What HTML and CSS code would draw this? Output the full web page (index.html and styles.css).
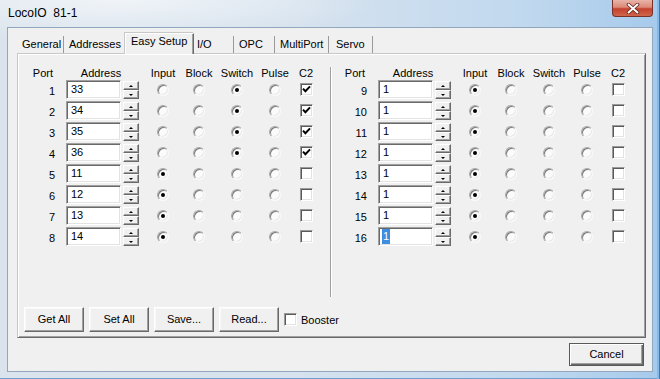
FILE: index.html
```html
<!DOCTYPE html>
<html>
<head>
<meta charset="utf-8">
<title>LocoIO 81-1</title>
<link rel="stylesheet" href="styles.css">
</head>
<body>
<div class="window">
  <div class="titlebar">
    <span class="title">LocoIO&nbsp;&nbsp;81-1</span>
    <div class="close">
      <svg width="14" height="11" viewBox="0 0 14 11">
        <path d="M2.5 1.5 L11.5 9.5 M11.5 1.5 L2.5 9.5" stroke="#5e2219" stroke-width="3.6" stroke-linecap="round"/>
        <path d="M2.5 1.5 L11.5 9.5 M11.5 1.5 L2.5 9.5" stroke="#ffffff" stroke-width="2" stroke-linecap="round"/>
      </svg>
    </div>
  </div>
  <div class="frame">
    <div class="client">
      <div class="tabs">
        <div class="tab t-general">General</div>
        <div class="tab t-addr before-active">Addresses</div>
        <div class="tab t-easy active">Easy Setup</div>
        <div class="tab t-io">I/O</div>
        <div class="tab t-opc">OPC</div>
        <div class="tab t-multi">MultiPort</div>
        <div class="tab t-servo">Servo</div>
      </div>
      <div class="panel">
        <div class="halves">
          <div class="half">
            <span class="hd hd-port">Port</span><span class="hd hd-addr">Address</span><span class="hd">Input</span><span class="hd">Block</span><span class="hd">Switch</span><span class="hd">Pulse</span><span class="hd">C2</span>

            <span class="port">1</span><span class="field">33</span><span class="spin"><i class="up"></i><i class="dn"></i></span><span class="cell"><i class="radio"></i></span><span class="cell"><i class="radio"></i></span><span class="cell"><i class="radio on"></i></span><span class="cell"><i class="radio"></i></span><span class="cell"><i class="check"><svg viewBox="0 0 9 9"><polyline points="1,3.6 3.4,6.2 8,1.4" fill="none" stroke="#000" stroke-width="2"/></svg></i></span>

            <span class="port">2</span><span class="field">34</span><span class="spin"><i class="up"></i><i class="dn"></i></span><span class="cell"><i class="radio"></i></span><span class="cell"><i class="radio"></i></span><span class="cell"><i class="radio on"></i></span><span class="cell"><i class="radio"></i></span><span class="cell"><i class="check"><svg viewBox="0 0 9 9"><polyline points="1,3.6 3.4,6.2 8,1.4" fill="none" stroke="#000" stroke-width="2"/></svg></i></span>

            <span class="port">3</span><span class="field">35</span><span class="spin"><i class="up"></i><i class="dn"></i></span><span class="cell"><i class="radio"></i></span><span class="cell"><i class="radio"></i></span><span class="cell"><i class="radio on"></i></span><span class="cell"><i class="radio"></i></span><span class="cell"><i class="check"><svg viewBox="0 0 9 9"><polyline points="1,3.6 3.4,6.2 8,1.4" fill="none" stroke="#000" stroke-width="2"/></svg></i></span>

            <span class="port">4</span><span class="field">36</span><span class="spin"><i class="up"></i><i class="dn"></i></span><span class="cell"><i class="radio"></i></span><span class="cell"><i class="radio"></i></span><span class="cell"><i class="radio on"></i></span><span class="cell"><i class="radio"></i></span><span class="cell"><i class="check"><svg viewBox="0 0 9 9"><polyline points="1,3.6 3.4,6.2 8,1.4" fill="none" stroke="#000" stroke-width="2"/></svg></i></span>

            <span class="port">5</span><span class="field">11</span><span class="spin"><i class="up"></i><i class="dn"></i></span><span class="cell"><i class="radio on"></i></span><span class="cell"><i class="radio"></i></span><span class="cell"><i class="radio"></i></span><span class="cell"><i class="radio"></i></span><span class="cell"><i class="check"></i></span>

            <span class="port">6</span><span class="field">12</span><span class="spin"><i class="up"></i><i class="dn"></i></span><span class="cell"><i class="radio on"></i></span><span class="cell"><i class="radio"></i></span><span class="cell"><i class="radio"></i></span><span class="cell"><i class="radio"></i></span><span class="cell"><i class="check"></i></span>

            <span class="port">7</span><span class="field">13</span><span class="spin"><i class="up"></i><i class="dn"></i></span><span class="cell"><i class="radio on"></i></span><span class="cell"><i class="radio"></i></span><span class="cell"><i class="radio"></i></span><span class="cell"><i class="radio"></i></span><span class="cell"><i class="check"></i></span>

            <span class="port">8</span><span class="field">14</span><span class="spin"><i class="up"></i><i class="dn"></i></span><span class="cell"><i class="radio on"></i></span><span class="cell"><i class="radio"></i></span><span class="cell"><i class="radio"></i></span><span class="cell"><i class="radio"></i></span><span class="cell"><i class="check"></i></span>
          </div>
          <div class="half half-right">
            <span class="hd hd-port">Port</span><span class="hd hd-addr">Address</span><span class="hd">Input</span><span class="hd">Block</span><span class="hd">Switch</span><span class="hd">Pulse</span><span class="hd">C2</span>

            <span class="port">9</span><span class="field">1</span><span class="spin"><i class="up"></i><i class="dn"></i></span><span class="cell"><i class="radio on"></i></span><span class="cell"><i class="radio"></i></span><span class="cell"><i class="radio"></i></span><span class="cell"><i class="radio"></i></span><span class="cell"><i class="check"></i></span>

            <span class="port">10</span><span class="field">1</span><span class="spin"><i class="up"></i><i class="dn"></i></span><span class="cell"><i class="radio on"></i></span><span class="cell"><i class="radio"></i></span><span class="cell"><i class="radio"></i></span><span class="cell"><i class="radio"></i></span><span class="cell"><i class="check"></i></span>

            <span class="port">11</span><span class="field">1</span><span class="spin"><i class="up"></i><i class="dn"></i></span><span class="cell"><i class="radio on"></i></span><span class="cell"><i class="radio"></i></span><span class="cell"><i class="radio"></i></span><span class="cell"><i class="radio"></i></span><span class="cell"><i class="check"></i></span>

            <span class="port">12</span><span class="field">1</span><span class="spin"><i class="up"></i><i class="dn"></i></span><span class="cell"><i class="radio on"></i></span><span class="cell"><i class="radio"></i></span><span class="cell"><i class="radio"></i></span><span class="cell"><i class="radio"></i></span><span class="cell"><i class="check"></i></span>

            <span class="port">13</span><span class="field">1</span><span class="spin"><i class="up"></i><i class="dn"></i></span><span class="cell"><i class="radio on"></i></span><span class="cell"><i class="radio"></i></span><span class="cell"><i class="radio"></i></span><span class="cell"><i class="radio"></i></span><span class="cell"><i class="check"></i></span>

            <span class="port">14</span><span class="field">1</span><span class="spin"><i class="up"></i><i class="dn"></i></span><span class="cell"><i class="radio on"></i></span><span class="cell"><i class="radio"></i></span><span class="cell"><i class="radio"></i></span><span class="cell"><i class="radio"></i></span><span class="cell"><i class="check"></i></span>

            <span class="port">15</span><span class="field">1</span><span class="spin"><i class="up"></i><i class="dn"></i></span><span class="cell"><i class="radio on"></i></span><span class="cell"><i class="radio"></i></span><span class="cell"><i class="radio"></i></span><span class="cell"><i class="radio"></i></span><span class="cell"><i class="check"></i></span>

            <span class="port">16</span><span class="field"><span class="sel">1</span></span><span class="spin"><i class="up"></i><i class="dn"></i></span><span class="cell"><i class="radio on"></i></span><span class="cell"><i class="radio"></i></span><span class="cell"><i class="radio"></i></span><span class="cell"><i class="radio"></i></span><span class="cell"><i class="check"></i></span>
          </div>
        </div>
        <div class="btnrow">
          <span class="btn">Get All</span>
          <span class="btn">Set All</span>
          <span class="btn">Save...</span>
          <span class="btn">Read...</span>
          <span class="booster"><i class="check"></i><span>Booster</span></span>
        </div>
      </div>
      <div class="footer">
        <span class="btn cancel">Cancel</span>
      </div>
    </div>
  </div>
</div>
</body>
</html>
```
FILE: styles.css
```css
html, body {
  margin: 0;
  padding: 0;
}
body {
  width: 660px;
  height: 379px;
  overflow: hidden;
  font-family: "Liberation Sans", Arial, sans-serif;
  font-size: 11px;
  color: #000;
}
.window {
  width: 660px;
  height: 379px;
  display: flex;
  flex-direction: column;
  background:
    radial-gradient(ellipse 260px 40px at 120px 0px, rgba(255,255,255,0.6), rgba(255,255,255,0) 100%),
    linear-gradient(to right, #dbe4ed 0%, #d6e2ee 45%, #c0d8ee 80%, #a6caec 100%);
  box-shadow: inset -1px 0 #3c78b6, inset -3px 0 #86b9e8, inset 0 -1px #6f9fcf;
}
.titlebar {
  height: 27px;
  flex: none;
  display: flex;
  justify-content: space-between;
  align-items: flex-start;
}
.title {
  font-size: 12px;
  line-height: 27px;
  padding-left: 8px;
  white-space: nowrap;
}
.close {
  width: 41px;
  height: 17px;
  margin-right: 7px;
  box-sizing: border-box;
  border: 1px solid #7a3127;
  border-top: none;
  border-radius: 0 0 4px 4px;
  background: linear-gradient(#e8b4a8 0%, #dc8a78 45%, #c4412e 55%, #d0654c 100%);
  display: flex;
  align-items: center;
  justify-content: center;
}
.close svg {
  display: block;
}
.frame {
  flex: 1;
  display: flex;
  padding: 0 7px 7px 7px;
}
.client {
  flex: 1;
  display: flex;
  flex-direction: column;
  background: #f0f0f0;
  border: 1px solid #91a7bd;
  padding: 5px 6px 5px 9px;
}
.tabs {
  display: flex;
  align-items: flex-end;
  height: 20px;
  flex: none;
}
.tab {
  height: 17px;
  line-height: 17px;
  box-sizing: border-box;
  padding-left: 5px;
  border-right: 1px solid #9a9a9a;
  white-space: nowrap;
}
.tab.before-active {
  border-right: none;
}
.tab.active {
  height: 21px;
  line-height: 15px;
  margin-bottom: -1px;
  border: 1px solid;
  border-color: #fff #696969 #f0f0f0 #fff;
  border-bottom: none;
  box-shadow: inset -1px 0 #a0a0a0, -1px -1px 0 #c8c8c8;
  background: #f0f0f0;
  position: relative;
  z-index: 1;
}
.t-general { width: 47px; }
.t-addr { width: 61px; }
.t-easy { width: 69px; }
.t-io { width: 40px; padding-left: 3px; }
.t-opc { width: 41px; }
.t-multi { width: 54px; }
.t-servo { width: 44px; padding-left: 7px; }

.panel {
  flex: none;
  height: 285px;
  box-sizing: border-box;
  border: 1px solid;
  border-color: #c8c8c8 #696969 #696969 #c8c8c8;
  box-shadow: inset 1px 1px #fff, inset -1px -1px #a0a0a0;
  padding: 13px 0 5px 0;
  display: flex;
  flex-direction: column;
}
.halves {
  display: flex;
  height: 230px;
  flex: none;
}
.half {
  width: 312px;
  box-sizing: border-box;
  display: grid;
  grid-template-columns: 48px 57px 22px 36px 36px 40px 36px 26px;
  grid-template-rows: 13px;
  grid-auto-rows: 21px;
  align-content: start;
  align-items: start;
}
.half-right {
  border-left: 1px solid #a0a0a0;
  box-shadow: inset 1px 0 #fff;
  grid-template-columns: 47px 57px 22px 36px 36px 40px 36px 26px;
}
.hd {
  line-height: 13px;
  text-align: center;
  white-space: nowrap;
}
.hd-port {
  text-align: right;
  padding-right: 13px;
}
.hd-addr {
  grid-column: span 2;
  padding-right: 9px;
}
.port {
  text-align: right;
  padding-right: 11px;
  padding-top: 2px;
  line-height: 19px;
}
.field {
  width: 55px;
  height: 19px;
  box-sizing: border-box;
  background: #fff;
  border: 1px solid;
  border-color: #a0a0a0 #fff #fff #a0a0a0;
  box-shadow: inset 1px 1px #696969, inset -1px -1px #e3e3e3;
  padding-left: 4px;
  line-height: 17px;
}
.sel {
  background: #3d8ee0;
  color: #fff;
  padding: 0 1px;
  margin-left: -1px;
  display: inline-block;
  line-height: 15px;
}
.spin {
  width: 16px;
  margin-top: 1px;
  display: flex;
  flex-direction: column;
}
.spin i {
  display: flex;
  align-items: center;
  justify-content: center;
  height: 9px;
  box-sizing: border-box;
  border: 1px solid;
  border-color: #fff #696969 #696969 #fff;
  box-shadow: inset -1px -1px #a0a0a0;
  background: #f0f0f0;
}
.spin .up::after {
  content: "";
  border-left: 2px solid transparent;
  border-right: 2px solid transparent;
  border-bottom: 2px solid #000;
}
.spin .dn::after {
  content: "";
  border-left: 2px solid transparent;
  border-right: 2px solid transparent;
  border-top: 2px solid #000;
}
.cell {
  height: 19px;
  display: flex;
  align-items: center;
  justify-content: center;
}
.radio {
  width: 12px;
  height: 12px;
  box-sizing: border-box;
  border-radius: 50%;
  border: 1px solid;
  border-color: #a8a8a8 #fafafa #fafafa #a8a8a8;
  box-shadow: inset 1px 1px #7a7a7a, inset -1px -1px #e8e8e8;
  background: #fbfbfb;
  display: flex;
  align-items: center;
  justify-content: center;
}
.radio.on::after {
  content: "";
  width: 4px;
  height: 4px;
  border-radius: 50%;
  background: #000;
}
.check {
  width: 13px;
  height: 13px;
  box-sizing: border-box;
  border: 1px solid;
  border-color: #9a9a9a #fff #fff #9a9a9a;
  box-shadow: inset 1px 1px #5a5a5a, inset -1px -1px #e3e3e3;
  background: #fff;
  padding: 1px;
  display: block;
}
.check svg {
  display: block;
  width: 9px;
  height: 9px;
}
.btnrow {
  display: flex;
  align-items: center;
  gap: 5px;
  padding-left: 6px;
  margin-top: 10px;
  height: 25px;
  flex: none;
}
.btn {
  width: 60px;
  height: 25px;
  box-sizing: border-box;
  border: 1px solid;
  border-color: #fff #696969 #696969 #fff;
  box-shadow: inset -1px -1px #a0a0a0, inset 1px 1px #f8f8f8;
  background: #f0f0f0;
  text-align: center;
  line-height: 23px;
  white-space: nowrap;
}
.booster {
  display: flex;
  align-items: center;
  gap: 4px;
  white-space: nowrap;
}
.footer {
  display: flex;
  justify-content: flex-end;
  margin-top: 5px;
  padding-right: 2px;
  flex: none;
}
.cancel {
  width: 75px;
  height: 23px;
  line-height: 21px;
  border: 1px solid #5a5a5a;
  box-shadow: inset 1px 1px #fff, inset -1px -1px #696969, inset -2px -2px #a0a0a0;
}
```
